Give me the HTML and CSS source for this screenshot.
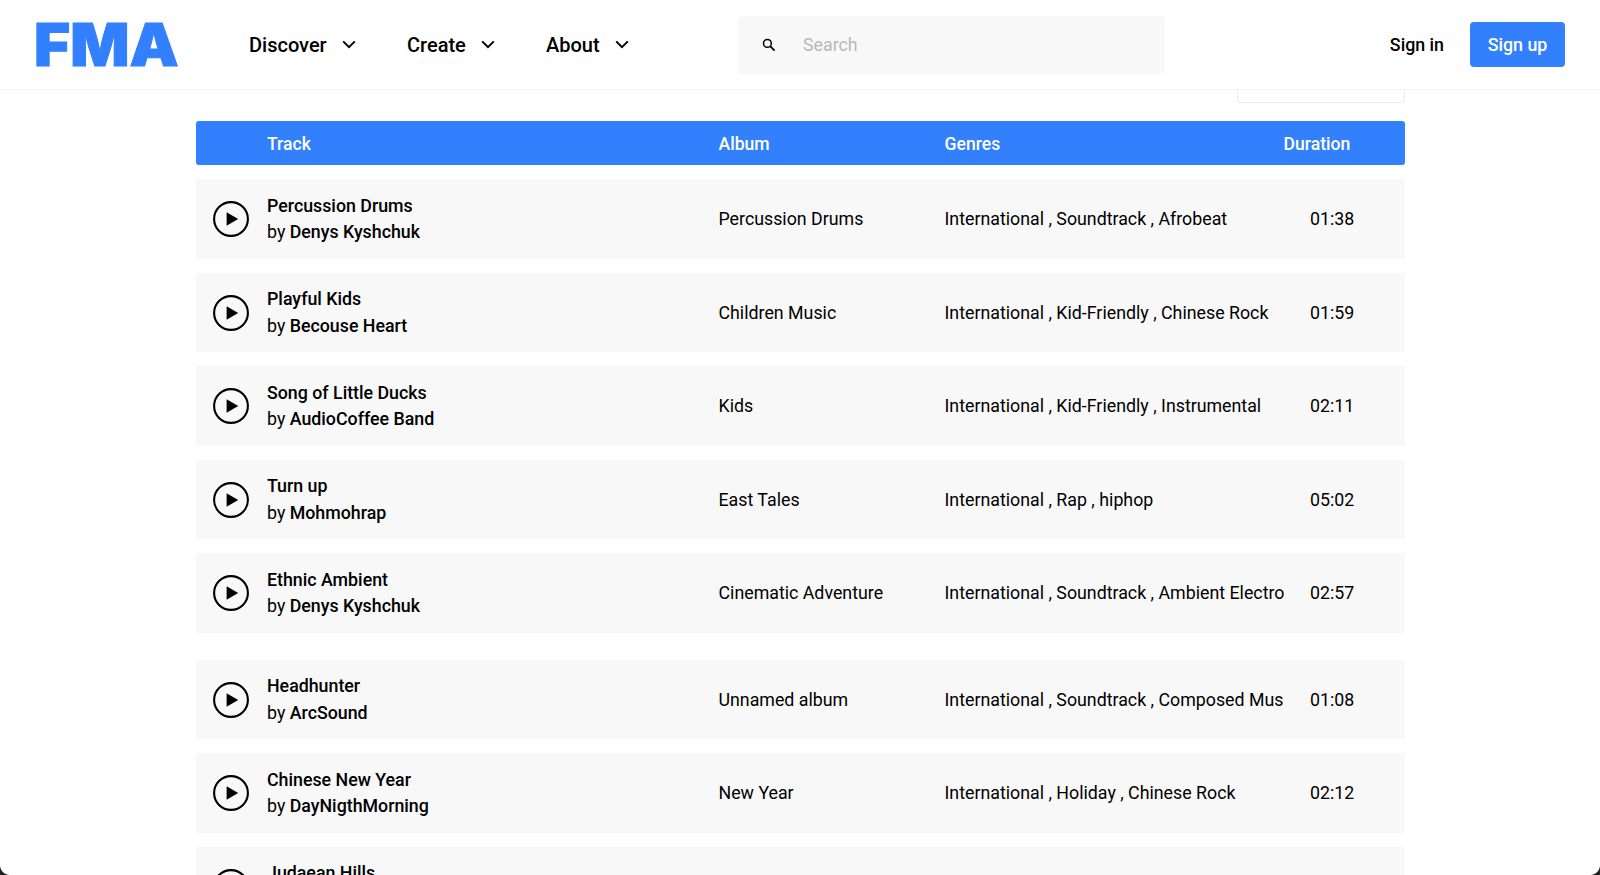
FILE: index.html
```html
<!DOCTYPE html>
<html lang="en">
<head>
<meta charset="utf-8">
<title>FMA</title>
<link rel="stylesheet" href="styles.css">
</head>
<body>
<svg class="defs" width="0" height="0" aria-hidden="true">
  <symbol id="play" viewBox="0 0 36 36">
    <circle cx="18" cy="18" r="16.9" fill="none" stroke="#000" stroke-width="2.1"/>
    <path d="M13.6 11.2 L25.2 18 L13.6 24.8 Z" fill="#000"/>
  </symbol>
  <symbol id="chev" viewBox="0 0 14 9">
    <path d="M1.2 1.4 L7 7.2 L12.8 1.4" fill="none" stroke="#000" stroke-width="2"/>
  </symbol>
</svg>
<header class="topbar">
  <a class="logo"><span class="logo-text">FMA</span></a>
  <nav class="nav">
    <a class="nav-item discover">Discover<svg class="chev"><use href="#chev"/></svg></a>
    <a class="nav-item create">Create<svg class="chev"><use href="#chev"/></svg></a>
    <a class="nav-item">About<svg class="chev"><use href="#chev"/></svg></a>
  </nav>
  <div class="search">
    <svg class="search-icon" viewBox="0 0 14 14"><circle cx="5.4" cy="5.4" r="3.9" fill="none" stroke="#000" stroke-width="1.5"/><path d="M8.4 8.4 L12.6 12.6" stroke="#000" stroke-width="1.8"/></svg>
    <span class="placeholder">Search</span>
  </div>
  <a class="signin">Sign in</a>
  <a class="signup">Sign up</a>
</header>
<main class="content">
  <div class="card-stub"></div>
  <div class="grid thead">
    <span>Track</span><span>Album</span><span>Genres</span><span>Duration</span>
  </div>
  <section class="list">
    <div class="grid row"><div class="track"><svg class="play"><use href="#play"/></svg><p class="title">Percussion Drums</p><p class="by">by <b>Denys Kyshchuk</b></p></div><span>Percussion Drums</span><span>International , Soundtrack , Afrobeat</span><span class="dur">01:38</span></div>
    <div class="grid row"><div class="track"><svg class="play"><use href="#play"/></svg><p class="title">Playful Kids</p><p class="by">by <b>Becouse Heart</b></p></div><span>Children Music</span><span>International , Kid-Friendly , Chinese Rock</span><span class="dur">01:59</span></div>
    <div class="grid row"><div class="track"><svg class="play"><use href="#play"/></svg><p class="title">Song of Little Ducks</p><p class="by">by <b>AudioCoffee Band</b></p></div><span>Kids</span><span>International , Kid-Friendly , Instrumental</span><span class="dur">02:11</span></div>
    <div class="grid row"><div class="track"><svg class="play"><use href="#play"/></svg><p class="title">Turn up</p><p class="by">by <b>Mohmohrap</b></p></div><span>East Tales</span><span>International , Rap , hiphop</span><span class="dur">05:02</span></div>
    <div class="grid row"><div class="track"><svg class="play"><use href="#play"/></svg><p class="title">Ethnic Ambient</p><p class="by">by <b>Denys Kyshchuk</b></p></div><span>Cinematic Adventure</span><span>International , Soundtrack , Ambient Electro</span><span class="dur">02:57</span></div>
  </section>
  <section class="list second">
    <div class="grid row"><div class="track"><svg class="play"><use href="#play"/></svg><p class="title">Headhunter</p><p class="by">by <b>ArcSound</b></p></div><span>Unnamed album</span><span>International , Soundtrack , Composed Mus</span><span class="dur">01:08</span></div>
    <div class="grid row"><div class="track"><svg class="play"><use href="#play"/></svg><p class="title">Chinese New Year</p><p class="by">by <b>DayNigthMorning</b></p></div><span>New Year</span><span>International , Holiday , Chinese Rock</span><span class="dur">02:12</span></div>
    <div class="grid row"><div class="track"><svg class="play"><use href="#play"/></svg><p class="title">Judaean Hills</p><p class="by">&nbsp;</p></div></div>
  </section>
</main>
<i class="corner left"></i>
<i class="corner right"></i>
</body>
</html>
```
FILE: styles.css
```css
* { box-sizing: border-box; }
html, body { height: 100%; }
body {
  margin: 0;
  height: 875px;
  overflow: hidden;
  background: #fff;
  color: #000;
  font-family: Roboto, "Liberation Sans", sans-serif;
  font-size: 17.8px;
  position: relative;
}
.defs { position: absolute; }
.topbar {
  height: 90px;
  display: flex;
  align-items: center;
  padding: 0 35px;
  border-bottom: 1px solid #f2f2f2;
  background: #fff;
}
.logo {
  width: 214px;
  font-family: Inter, sans-serif;
  font-weight: 900;
  font-size: 59px;
  line-height: 1;
  color: #3380ff;
}
.logo-text {
  display: inline-block;
  margin-left: -1px;
  -webkit-text-stroke: 1px #3380ff;
  transform: scaleX(1.05);
  transform-origin: left center;
}
.nav { display: flex; width: 489px; font-weight: 500; font-size: 20px; }
.nav-item { display: flex; align-items: center; width: 139px; }
.discover { width: 158px; }
.chev { width: 14px; height: 9px; margin-left: 15px; }
.search {
  width: 427px;
  height: 58px;
  background: #f8f8f8;
  border-radius: 5px;
  display: flex;
  align-items: center;
  padding-left: 24px;
}
.search-icon { width: 14px; height: 14px; }
.placeholder { margin-left: 27px; color: #b8b8b8; }
.signin { margin-left: auto; font-weight: 500; }
.signup {
  margin-left: 26px;
  width: 95px;
  height: 45px;
  background: #3380ff;
  color: #fff;
  font-weight: 500;
  border-radius: 4px;
  display: flex;
  align-items: center;
  justify-content: center;
}
.content { width: 1209px; margin-left: 196px; }
.card-stub {
  width: 168px;
  height: 13px;
  margin-left: auto;
  background: #fff;
  border: 1px solid #ececec;
  border-top: 0;
  border-radius: 0 0 4px 4px;
}
.grid {
  display: grid;
  grid-template-columns: 522.5px 226px 340px 1fr;
  align-items: center;
}
.grid > span { white-space: nowrap; }
.thead {
  margin-top: 18px;
  height: 44px;
  padding: 1px 0 0 71px;
  grid-template-columns: 451.5px 226px 339px 1fr;
  background: #3380ff;
  color: #fff;
  font-size: 17.6px;
  font-weight: 500;
  border-radius: 3px;
}
.list { display: flex; flex-direction: column; gap: 14px; margin-top: 14px; }
.second { margin-top: 27px; }
.row { height: 79.5px; background: #f8f8f8; }
.track {
  display: grid;
  grid-template-columns: 71px 1fr;
  align-content: center;
  padding-top: 1px;
}
.play { grid-row: 1 / span 2; width: 36px; height: 36px; margin-left: 17px; align-self: center; }
.title { margin: 0; line-height: 26.5px; font-weight: 500; }
.by { margin: 0; line-height: 26.5px; }
.by b { font-weight: 500; }
.dur { padding-left: 25.5px; }
.corner { position: absolute; bottom: 0; width: 10px; height: 10px; }
.corner.left { left: 0; background: radial-gradient(circle at 100% 0, transparent 9.5px, #222 10.5px); }
.corner.right { right: 0; background: radial-gradient(circle at 0 0, transparent 9.5px, #222 10.5px); }
```
